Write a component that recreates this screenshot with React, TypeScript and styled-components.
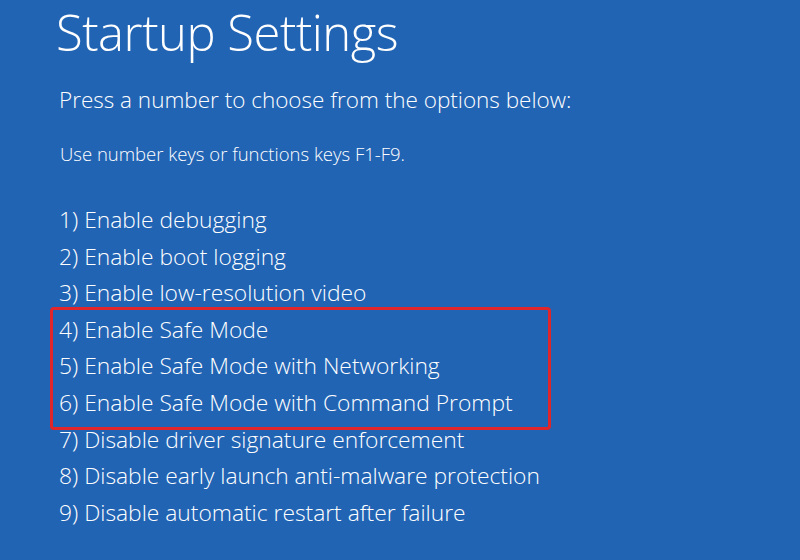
import styled, { createGlobalStyle } from "styled-components";

const GlobalStyle = createGlobalStyle`
  html, body {
    margin: 0;
    padding: 0;
    background: #2264b4;
  }
  body {
    font-family: "Open Sans", "Noto Sans", sans-serif;
    color: #ffffff;
  }
`;

const Screen = styled.div`
  width: 800px;
  height: 560px;
  overflow: hidden;
  background: #2264b4;
  box-sizing: border-box;
  padding: 0 0 0 56px;
`;

const Title = styled.h1`
  margin: 0;
  font-size: 49px;
  font-weight: 300;
  line-height: 64px;
  letter-spacing: -0.5px;
`;

const Prompt = styled.p`
  margin: 21px 0 0 3px;
  font-size: 22.5px;
  font-weight: 300;
  line-height: 30px;
`;

const Hint = styled.p`
  margin: 27px 0 0 4px;
  font-size: 18.5px;
  font-weight: 300;
  line-height: 24px;
`;

const OptionList = styled.ol`
  list-style: none;
  margin: 36px 0 0 0;
  padding: 0;
`;

const Highlight = styled.div`
  margin: -5px 0 -8px -6px;
  padding: 2px 0 5px 3px;
  width: 501px;
  border: 3px solid #e0252b;
  border-radius: 4px;
  box-sizing: border-box;
`;

const Option = styled.li`
  font-size: 22.8px;
  font-weight: 300;
  line-height: 36.6px;
  padding-left: 3px;
  white-space: nowrap;
`;

const options = [
  "Enable debugging",
  "Enable boot logging",
  "Enable low-resolution video",
  "Enable Safe Mode",
  "Enable Safe Mode with Networking",
  "Enable Safe Mode with Command Prompt",
  "Disable driver signature enforcement",
  "Disable early launch anti-malware protection",
  "Disable automatic restart after failure",
];

export default function App() {
  const renderOption = (i: number) => (
    <Option key={i}>
      {i + 1}) {options[i]}
    </Option>
  );

  return (
    <>
      <GlobalStyle />
      <Screen>
        <Title>Startup Settings</Title>
        <Prompt>Press a number to choose from the options below:</Prompt>
        <Hint>Use number keys or functions keys F1-F9.</Hint>
        <OptionList>
          {[0, 1, 2].map(renderOption)}
          <Highlight>{[3, 4, 5].map(renderOption)}</Highlight>
          {[6, 7, 8].map(renderOption)}
        </OptionList>
      </Screen>
    </>
  );
}
